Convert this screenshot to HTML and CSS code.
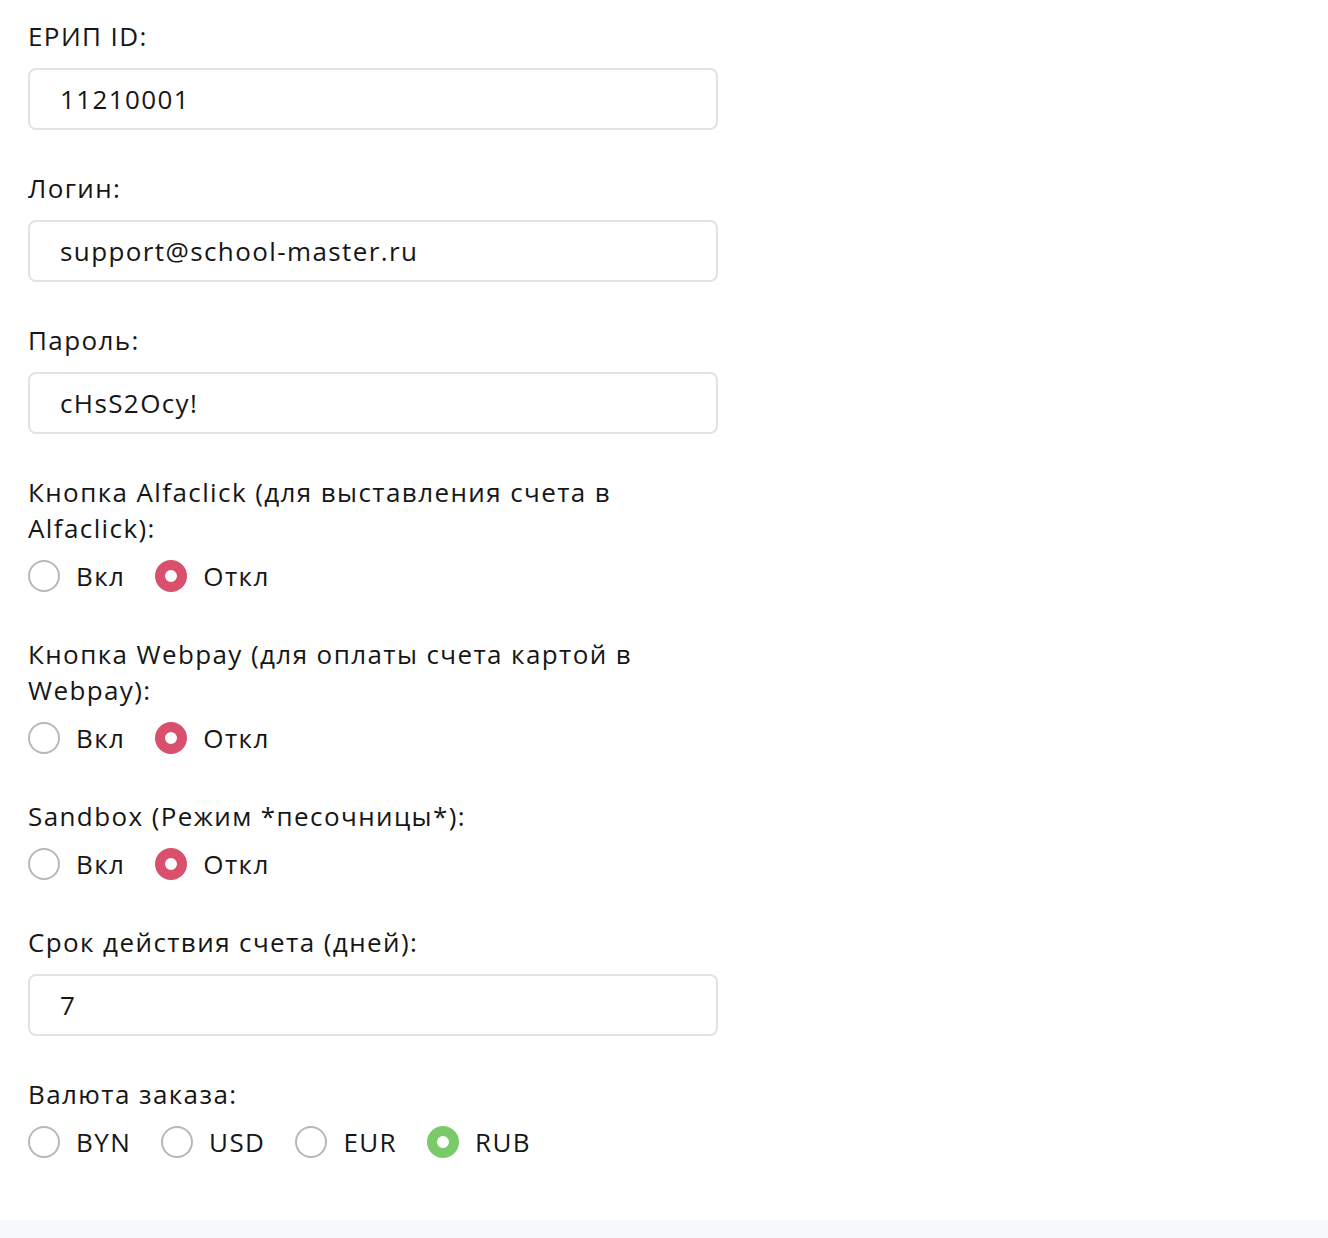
FILE: index.html
```html
<!DOCTYPE html>
<html lang="ru">
<head>
<meta charset="utf-8">
<title>Настройки ЕРИП</title>
<link rel="stylesheet" href="styles.css">
</head>
<body>
<main class="settings">
  <div class="field">
    <div class="label">ЕРИП ID:</div>
    <div class="input">11210001</div>
  </div>
  <div class="field">
    <div class="label">Логин:</div>
    <div class="input">support@school-master.ru</div>
  </div>
  <div class="field">
    <div class="label">Пароль:</div>
    <div class="input">cHsS2Ocy!</div>
  </div>
  <div class="field">
    <div class="label narrow">Кнопка Alfaclick (для выставления счета в Alfaclick):</div>
    <div class="radios">
      <span class="radio"><span class="dot"></span>Вкл</span>
      <span class="radio"><span class="dot on red"></span>Откл</span>
    </div>
  </div>
  <div class="field">
    <div class="label narrow">Кнопка Webpay (для оплаты счета картой в Webpay):</div>
    <div class="radios">
      <span class="radio"><span class="dot"></span>Вкл</span>
      <span class="radio"><span class="dot on red"></span>Откл</span>
    </div>
  </div>
  <div class="field">
    <div class="label">Sandbox (Режим *песочницы*):</div>
    <div class="radios">
      <span class="radio"><span class="dot"></span>Вкл</span>
      <span class="radio"><span class="dot on red"></span>Откл</span>
    </div>
  </div>
  <div class="field">
    <div class="label">Срок действия счета (дней):</div>
    <div class="input">7</div>
  </div>
  <div class="field">
    <div class="label">Валюта заказа:</div>
    <div class="radios wide">
      <span class="radio"><span class="dot"></span>BYN</span>
      <span class="radio"><span class="dot"></span>USD</span>
      <span class="radio"><span class="dot"></span>EUR</span>
      <span class="radio"><span class="dot on green"></span>RUB</span>
    </div>
  </div>
</main>
<footer class="footer-band"></footer>
</body>
</html>
```

FILE: styles.css
```css
html, body {
  margin: 0;
  padding: 0;
  background: #ffffff;
}

body {
  font-family: "Open Sans", "Noto Sans", sans-serif;
  font-size: 26px;
  line-height: 36px;
  letter-spacing: 1.4px;
  color: #161616;
}

.settings {
  padding: 18px 28px 58px 28px;
  width: 690px;
}

.field {
  margin-bottom: 40px;
}

.field:last-child {
  margin-bottom: 0;
}

.label {
  margin-bottom: 14px;
}

.label.narrow {
  width: 640px;
}

/* labels sitting above a radio row are a little closer to it */
.field .label:has(+ .radios) {
  margin-bottom: 10px;
}

.input {
  box-sizing: border-box;
  height: 62px;
  border: 2px solid #e2e2e2;
  border-radius: 8px;
  padding: 0 30px;
  display: flex;
  align-items: center;
}

.radios {
  display: flex;
  align-items: center;
  gap: 30px;
  height: 40px;
}

.radio {
  display: flex;
  align-items: center;
  gap: 16px;
}

.dot {
  box-sizing: border-box;
  width: 32px;
  height: 32px;
  border-radius: 50%;
  border: 2px solid #b8b8b8;
  background: #fff;
}

.dot.on {
  border: 10px solid;
  background: #fff;
}

.dot.red {
  border-color: #d8506d;
}

.dot.green {
  border-color: #7aca6a;
}

.footer-band {
  height: 40px;
  background: #f7f8fc;
}
```
